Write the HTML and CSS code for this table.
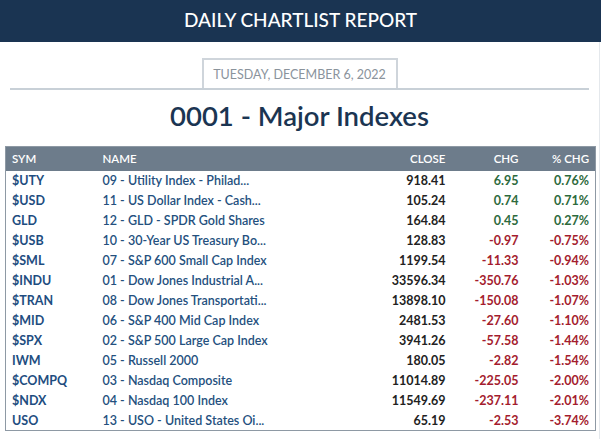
FILE: index.html
```html
<!DOCTYPE html>
<html>
<head>
<meta charset="utf-8">
<link rel="stylesheet" href="styles.css">
</head>
<body>
<header class="topbar">DAILY CHARTLIST REPORT</header>
<main class="page">
  <div class="date-wrap">
    <div class="date-box">TUESDAY, DECEMBER 6, 2022</div>
  </div>
  <h1 class="title">0001 - Major Indexes</h1>
  <table class="list">
    <thead>
      <tr><th class="sym">SYM</th><th class="name">NAME</th><th class="num close">CLOSE</th><th class="num chg">CHG</th><th class="num pct">% CHG</th></tr>
    </thead>
    <tbody>
      <tr><td class="sym">$UTY</td><td class="name">09 - Utility Index - Philad...</td><td class="num close">918.41</td><td class="num up">6.95</td><td class="num up">0.76%</td></tr>
      <tr><td class="sym">$USD</td><td class="name">11 - US Dollar Index - Cash...</td><td class="num close">105.24</td><td class="num up">0.74</td><td class="num up">0.71%</td></tr>
      <tr><td class="sym">GLD</td><td class="name">12 - GLD - SPDR Gold Shares</td><td class="num close">164.84</td><td class="num up">0.45</td><td class="num up">0.27%</td></tr>
      <tr><td class="sym">$USB</td><td class="name">10 - 30-Year US Treasury Bo...</td><td class="num close">128.83</td><td class="num down">-0.97</td><td class="num down">-0.75%</td></tr>
      <tr><td class="sym">$SML</td><td class="name">07 - S&amp;P 600 Small Cap Index</td><td class="num close">1199.54</td><td class="num down">-11.33</td><td class="num down">-0.94%</td></tr>
      <tr><td class="sym">$INDU</td><td class="name">01 - Dow Jones Industrial A...</td><td class="num close">33596.34</td><td class="num down">-350.76</td><td class="num down">-1.03%</td></tr>
      <tr><td class="sym">$TRAN</td><td class="name">08 - Dow Jones Transportati...</td><td class="num close">13898.10</td><td class="num down">-150.08</td><td class="num down">-1.07%</td></tr>
      <tr><td class="sym">$MID</td><td class="name">06 - S&amp;P 400 Mid Cap Index</td><td class="num close">2481.53</td><td class="num down">-27.60</td><td class="num down">-1.10%</td></tr>
      <tr><td class="sym">$SPX</td><td class="name">02 - S&amp;P 500 Large Cap Index</td><td class="num close">3941.26</td><td class="num down">-57.58</td><td class="num down">-1.44%</td></tr>
      <tr><td class="sym">IWM</td><td class="name">05 - Russell 2000</td><td class="num close">180.05</td><td class="num down">-2.82</td><td class="num down">-1.54%</td></tr>
      <tr><td class="sym">$COMPQ</td><td class="name">03 - Nasdaq Composite</td><td class="num close">11014.89</td><td class="num down">-225.05</td><td class="num down">-2.00%</td></tr>
      <tr><td class="sym">$NDX</td><td class="name">04 - Nasdaq 100 Index</td><td class="num close">11549.69</td><td class="num down">-237.11</td><td class="num down">-2.01%</td></tr>
      <tr><td class="sym">USO</td><td class="name">13 - USO - United States Oi...</td><td class="num close">65.19</td><td class="num down">-2.53</td><td class="num down">-3.74%</td></tr>
    </tbody>
  </table>
</main>
</body>
</html>
```

FILE: styles.css
```css
* { box-sizing: border-box; }
html, body { margin: 0; padding: 0; background: #fff; }
body {
  font-family: Lato, "Noto Sans", sans-serif;
  width: 601px;
  height: 439px;
  overflow: hidden;
}
.topbar {
  background: #1a3452;
  color: #fff;
  height: 42px;
  line-height: 40px;
  text-align: center;
  font-size: 19px;
  font-weight: 500;
}
.page {
  border-right: 1px solid #e4e8ec;
  margin-right: 1px;
  padding: 16px 5px 0 5px;
  height: 397px;
}
.date-wrap {
  margin: 0 5px;
  border-bottom: 2px solid #c8d0d7;
  display: flex;
  justify-content: center;
}
.date-box {
  width: 196px;
  height: 30px;
  border: 2px solid #cfd5db;
  border-bottom: none;
  color: #8a939c;
  font-size: 12.5px;
  line-height: 29px;
  text-align: center;
}
.title {
  margin: 10px 0 0 0;
  height: 46px;
  line-height: 31px;
  text-align: center;
  color: #1b3552;
  font-size: 27.5px;
  font-weight: 600;
}
.list {
  width: 591px;
  border-collapse: collapse;
  border: 1px solid #8e99a4;
  font-size: 12.5px;
  font-weight: 700;
}
.list th {
  background: #6d7c8b;
  color: #fff;
  font-weight: 600;
  font-size: 11.5px;
  height: 24px;
  text-align: left;
}
.list td { height: 20px; }
.list th, .list td { padding: 0; white-space: nowrap; }
.list .sym { padding-left: 6px; width: 97px; color: #1e4d80; }
.list .name { color: #24507e; font-weight: 600; }
.list .num { text-align: right; }
.list .close { width: 160px; color: #222; }
.list .chg { width: 73px; }
.list .pct { width: 77px; padding-right: 6px; }
.list td.num:last-child { padding-right: 6px; }
.list th.num { text-align: right; }
.list th.sym, .list th.name, .list th.close { color: #fff; }
.up { color: #2d6a3d; }
.down { color: #a41c2e; }
```
